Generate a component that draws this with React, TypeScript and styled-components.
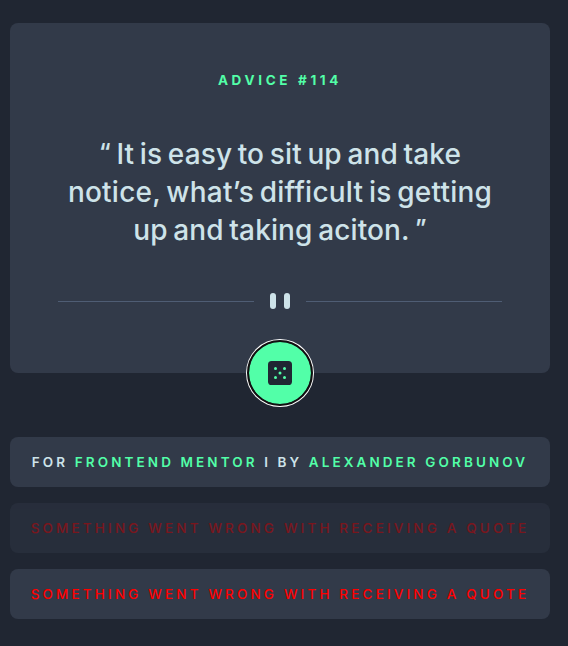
import React from 'react';
import styled, { createGlobalStyle } from 'styled-components';

const GlobalStyle = createGlobalStyle`
  * { box-sizing: border-box; }
  body {
    margin: 0;
    min-height: 100vh;
    background: #202632;
    font-family: Inter, 'Liberation Sans', sans-serif;
  }
`;

const Page = styled.main`
  display: flex;
  flex-direction: column;
  gap: 16px;
  padding: 23px 18px 27px 10px;
`;

const Card = styled.section`
  position: relative;
  display: flex;
  flex-direction: column;
  align-items: center;
  height: 350px;
  margin-bottom: 48px;
  padding: 48px;
  border-radius: 8px;
  background: #323a49;
`;

const Title = styled.h1`
  margin: 0;
  font-size: 13.5px;
  font-weight: 650;
  line-height: 18px;
  letter-spacing: 3.65px;
  color: #52ffa8;
`;

const Quote = styled.blockquote`
  margin: 46px 0 0;
  display: flex;
  flex-direction: column;
  align-items: center;
  color: #cee3e9;
  font-size: 28px;
  font-weight: 550;
  line-height: 38px;
  word-spacing: -2px;
  white-space: nowrap;
`;

const Line = styled.span<{ $tracking: number }>`
  height: 38px;
  letter-spacing: ${({ $tracking }) => $tracking}px;
`;

const Mark = styled.span`
  font-size: 23px;
  font-weight: 600;
  line-height: 1;
  vertical-align: 4px;
`;

const Divider = styled.div`
  display: flex;
  align-items: center;
  gap: 16px;
  width: 100%;
  margin-top: 44px;
  &::before, &::after {
    content: '';
    flex: 1;
    height: 1px;
    background: #4f5d74;
  }
`;

const Bars = styled.span`
  display: flex;
  gap: 8px;
`;

const Bar = styled.i`
  width: 6px;
  height: 16px;
  border-radius: 3px;
  background: #cee3e9;
`;

const DiceButton = styled.button`
  position: absolute;
  left: 50%;
  bottom: -33px;
  display: grid;
  place-items: center;
  width: 66px;
  height: 66px;
  margin-left: -33px;
  padding: 0;
  border: 2px solid #101010;
  border-radius: 50%;
  background: #52ffa8;
  background-clip: padding-box;
  box-shadow: 0 0 0 1px #fff;
`;

const Notice = styled.footer<{ $error?: boolean; $faded?: boolean }>`
  display: flex;
  align-items: center;
  justify-content: center;
  height: 50px;
  border-radius: 8px;
  background: #323a49;
  color: ${({ $error }) => ($error ? '#ff0000' : '#cee3e9')};
  font-size: 13.5px;
  font-weight: ${({ $error }) => ($error ? 450 : 600)};
  letter-spacing: ${({ $error }) => ($error ? 3.16 : 3.1)}px;
  white-space: pre;
  opacity: ${({ $faded }) => ($faded ? 0.4 : 1)};
`;

const Link = styled.a`
  color: #52ffa8;
`;

const Dice = () => (
  <svg width="24" height="24" viewBox="0 0 24 24">
    <rect width="24" height="24" rx="3.6" fill="#202733" />
    <g fill="#52ffa8">
      <circle cx="7.5" cy="7.5" r="1.5" />
      <circle cx="16.5" cy="7.5" r="1.5" />
      <circle cx="12" cy="12" r="1.5" />
      <circle cx="7.5" cy="16.5" r="1.5" />
      <circle cx="16.5" cy="16.5" r="1.5" />
    </g>
  </svg>
);

const ERROR_TEXT = 'SOMETHING WENT WRONG WITH RECEIVING A QUOTE';

export default function App() {
  return (
    <>
      <GlobalStyle />
      <Page>
        <Card>
          <Title>ADVICE #114</Title>
          <Quote>
            <Line $tracking={0.13}><Mark>“</Mark> It is easy to sit up and take</Line>
            <Line $tracking={0.22}>notice, what’s difficult is getting</Line>
            <Line $tracking={0.13}>up and taking aciton. <Mark>”</Mark></Line>
          </Quote>
          <Divider>
            <Bars><Bar /><Bar /></Bars>
          </Divider>
          <DiceButton aria-label="New advice"><Dice /></DiceButton>
        </Card>
        <Notice>
          <span>FOR <Link>FRONTEND MENTOR</Link> I BY <Link>ALEXANDER GORBUNOV</Link></span>
        </Notice>
        <Notice $error $faded>{ERROR_TEXT}</Notice>
        <Notice $error>{ERROR_TEXT}</Notice>
      </Page>
    </>
  );
}
